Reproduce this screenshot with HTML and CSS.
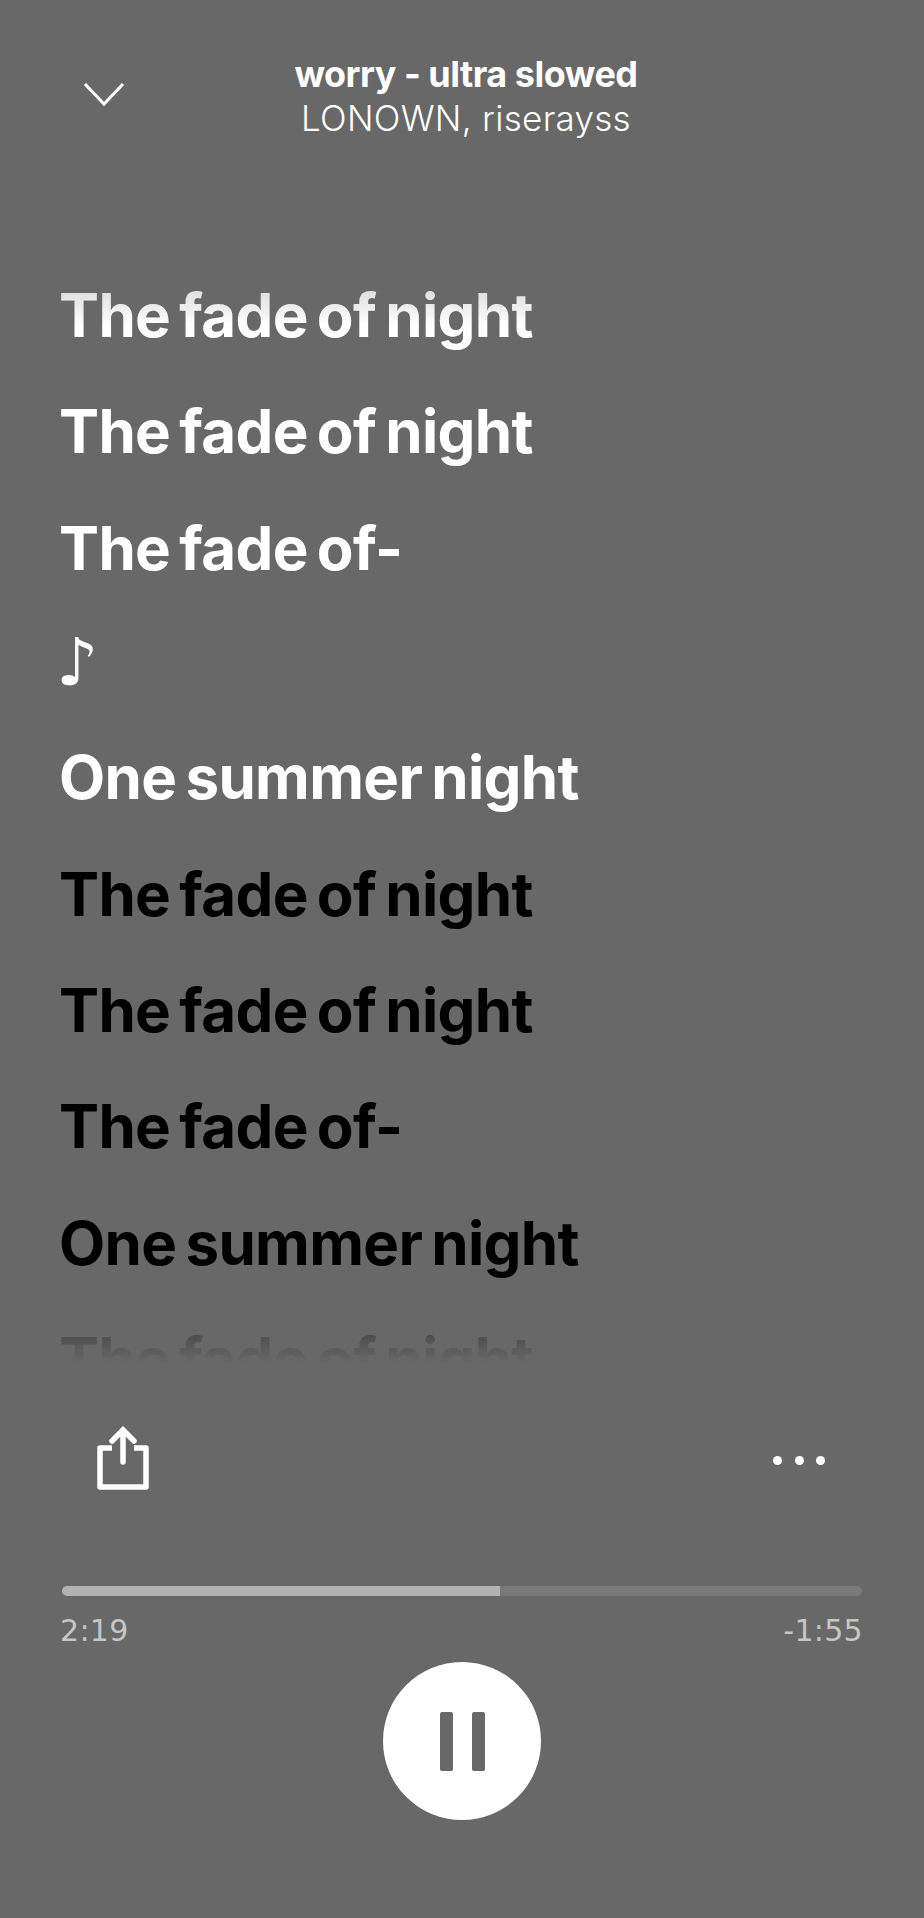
FILE: index.html
```html
<html>
  <head>
    <link rel="stylesheet" href="styles.css">
  </head>
  <body>
    <div class="player">
      <div class="header">
        <svg class="chevron" width="42" height="26" viewBox="0 0 42 26">
          <path d="M2 3 L21 23 L40 3" fill="none" stroke="white" stroke-width="3.2"/>
        </svg>
        <div class="track">
          <div class="title">worry - ultra slowed</div>
          <div class="artist">LONOWN, riserayss</div>
        </div>
      </div>

      <div class="lyrics">
        <p class="line">The fade of night</p>
        <p class="line">The fade of night</p>
        <p class="line">The fade of-</p>
        <p class="line note">♪</p>
        <p class="line">One summer night</p>
        <p class="line next">The fade of night</p>
        <p class="line next">The fade of night</p>
        <p class="line next">The fade of-</p>
        <p class="line next">One summer night</p>
        <p class="line next">The fade of night</p>
      </div>

      <div class="actions">
        <svg class="share" width="52" height="64" viewBox="0 0 52 64">
          <path d="M15 22 H3 V61 H49 V22 H37" fill="none" stroke="white" stroke-width="5.5" stroke-linejoin="round"/>
          <path d="M26 36 V4 M15 15 L26 4 L37 15" fill="none" stroke="white" stroke-width="5.5" stroke-linecap="round"/>
        </svg>
        <div class="more">
          <span class="dot"></span>
          <span class="dot"></span>
          <span class="dot"></span>
        </div>
      </div>

      <div class="progress">
        <div class="progress-fill"></div>
      </div>
      <div class="times">
        <span>2:19</span>
        <span>-1:55</span>
      </div>

      <button class="pause" type="button">
        <span class="pause-bar"></span>
        <span class="pause-bar"></span>
      </button>
    </div>
  </body>
</html>
```

FILE: styles.css
```css
body {
  margin: 0;
  background: #686868;
}

.player {
  height: 1918px;
  overflow: hidden;
  box-sizing: border-box;
  background: #686868;
  color: white;
  font-family: Inter, "Liberation Sans", sans-serif;
}

.header {
  position: relative;
  height: 250px;
  padding-top: 51px;
  box-sizing: border-box;
}

.chevron {
  position: absolute;
  left: 83px;
  top: 81px;
}

.track {
  text-align: center;
  margin-left: 8px;
}

.title {
  font-size: 36px;
  line-height: 46px;
  font-weight: 700;
  letter-spacing: -0.5px;
}

.artist {
  font-size: 35px;
  line-height: 42px;
  font-weight: 300;
  letter-spacing: 0.3px;
}

.lyrics {
  height: 1115px;
  box-sizing: border-box;
  overflow: hidden;
  padding: 7px 0 0 59px;
  -webkit-mask-image: linear-gradient(to bottom, rgba(0, 0, 0, 0.75) 35px, black 75px, black 1050px, rgba(0, 0, 0, 0.22) 1088px, transparent 1112px);
  mask-image: linear-gradient(to bottom, rgba(0, 0, 0, 0.75) 35px, black 75px, black 1050px, rgba(0, 0, 0, 0.22) 1088px, transparent 1112px);
}

.line {
  margin: 0;
  height: 116.4px;
  line-height: 116.4px;
  font-size: 60px;
  font-weight: 700;
  letter-spacing: -0.65px;
  word-spacing: -4.5px;
  white-space: nowrap;
}

.note {
  height: 113px;
  line-height: 113px;
  margin-left: -3px;
  font-family: "DejaVu Sans", sans-serif;
  font-size: 66px;
  letter-spacing: 0;
}

.next {
  color: black;
}

.actions {
  display: flex;
  justify-content: space-between;
  align-items: flex-start;
  height: 215px;
  padding: 61px 97px 0 97px;
  box-sizing: border-box;
}

.more {
  display: flex;
  gap: 12.5px;
  margin-top: 30px;
  margin-right: 2px;
}

.dot {
  width: 9px;
  height: 9px;
  border-radius: 50%;
  background: white;
}

.progress {
  height: 10px;
  margin: 6px 62px 0 62px;
  border-radius: 5px;
  background: #797979;
  overflow: hidden;
}

.progress-fill {
  width: 54.8%;
  height: 100%;
  background: #b2b2b2;
}

.times {
  display: flex;
  justify-content: space-between;
  padding: 0 61px 0 60px;
  margin-top: 17px;
  font-family: "DejaVu Sans", sans-serif;
  font-size: 30px;
  line-height: 36px;
  letter-spacing: 0.3px;
  color: #c6c6c6;
}

.pause {
  display: flex;
  justify-content: center;
  align-items: center;
  gap: 19px;
  width: 158px;
  height: 158px;
  margin: 13px auto 0 auto;
  padding: 0;
  border: none;
  border-radius: 50%;
  background: white;
}

.pause-bar {
  width: 13px;
  height: 59px;
  border-radius: 2px;
  background: #686868;
}
```
